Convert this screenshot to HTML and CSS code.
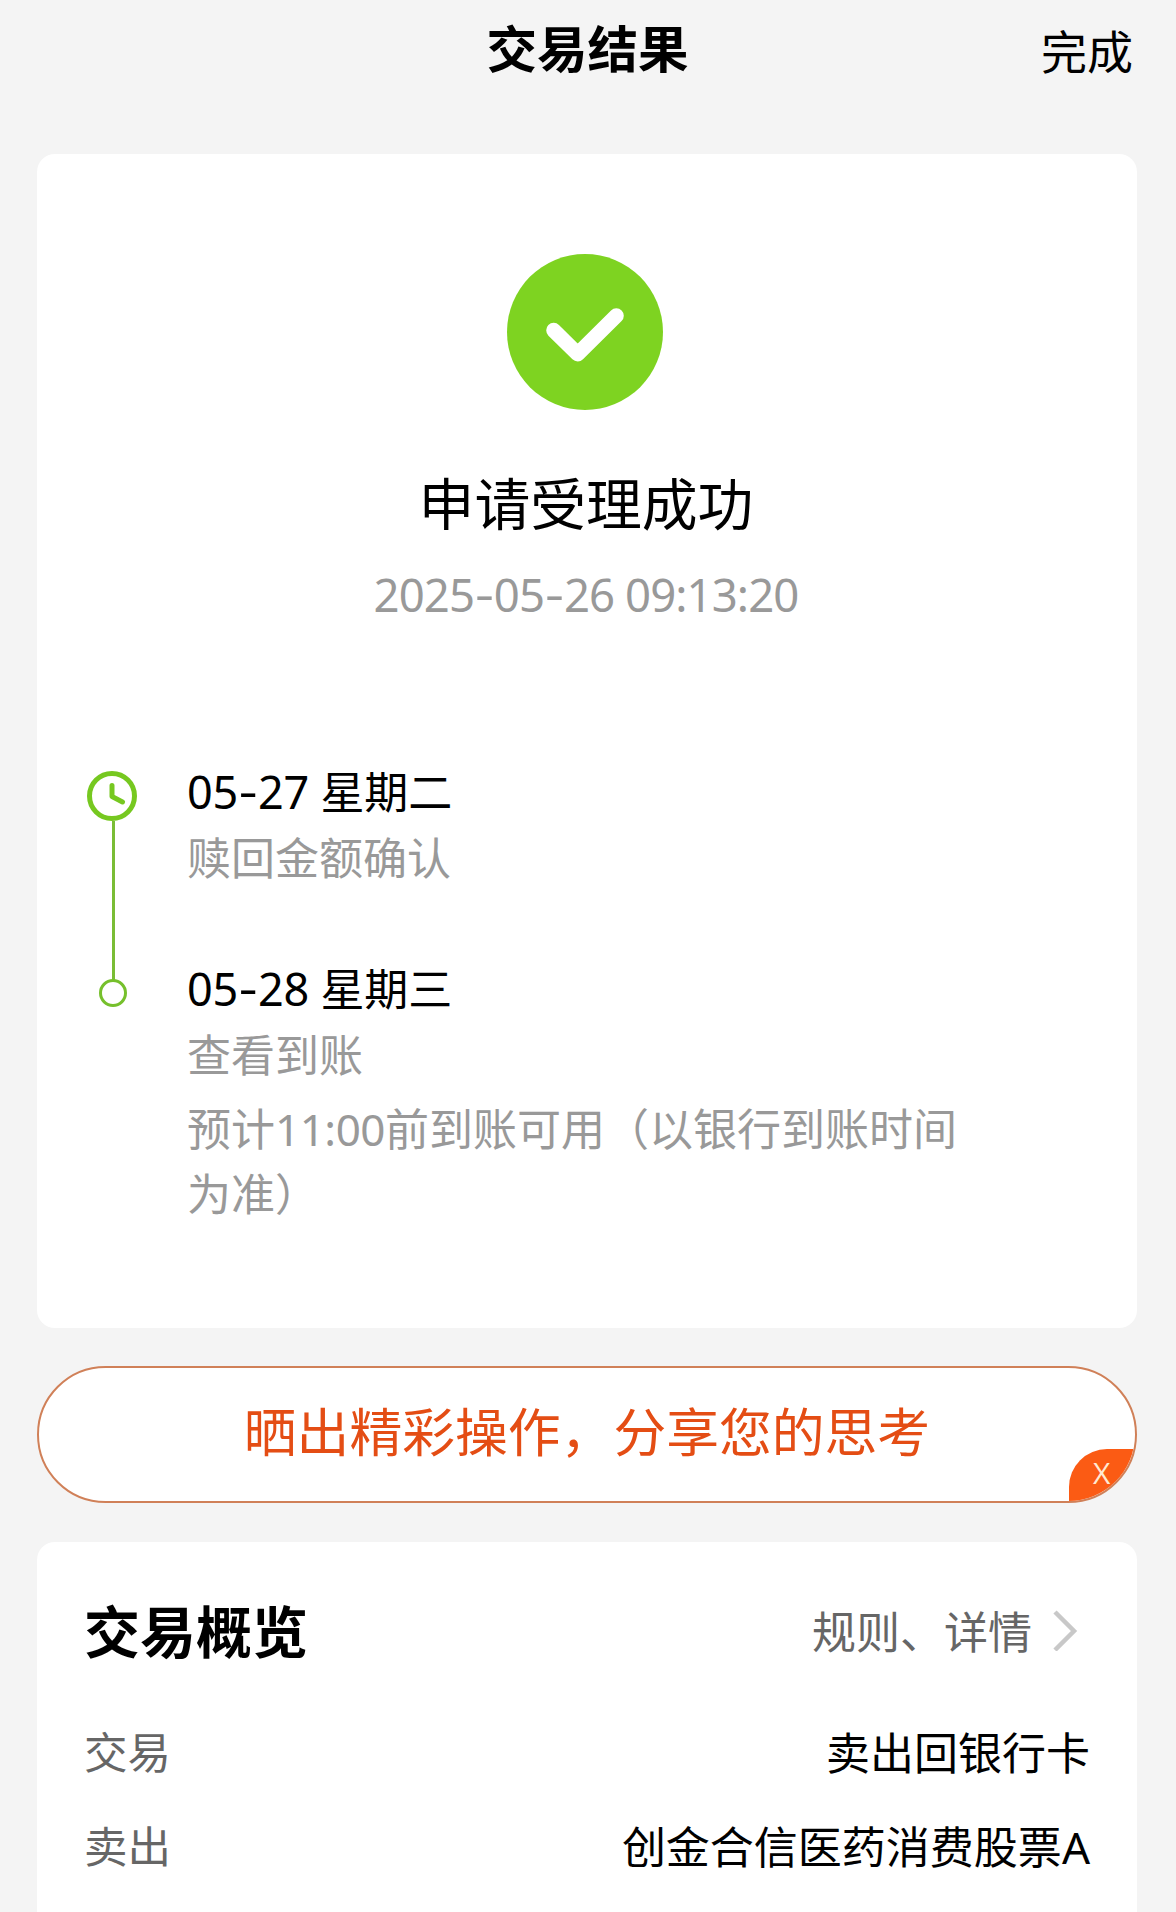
FILE: index.html
```html
<!DOCTYPE html>
<html lang="zh-CN">

<head>
  <meta charset="UTF-8">
  <meta name="viewport" content="width=device-width, initial-scale=1.0">
  <title>交易结果</title>
  <link rel="stylesheet" href="styles.css">
</head>

<body>
  <header class="navbar">
    <h1 class="navbar-title">交易结果</h1>
    <a class="navbar-done">完成</a>
  </header>

  <main>
    <section class="card result">
      <svg class="result-icon" viewBox="0 0 156 156">
        <circle cx="78" cy="78" r="78" fill="#7ed321" />
        <path d="M46.7 76.3L70.7 100L109.3 61.7" fill="none" stroke="#fff" stroke-width="15" stroke-linecap="round" stroke-linejoin="round" />
      </svg>
      <h2 class="result-title">申请受理成功</h2>
      <p class="result-time"><span class="num">2025<span class="dash">-</span>05<span class="dash">-</span>26 09:13:20</span></p>

      <div class="steps">
        <div class="step">
          <div class="rail">
            <svg class="clock" viewBox="0 0 52 50">
              <circle cx="25" cy="25" r="22.5" fill="none" stroke="#76c820" stroke-width="5" />
              <path d="M25 14.500V25.500L35.500 31" fill="none" stroke="#76c820" stroke-width="5" stroke-linecap="round" stroke-linejoin="round" />
            </svg>
            <span class="line"></span>
          </div>
          <div class="step-text">
            <p class="step-date"><span class="num">05<span class="dash">-</span>27 </span>星期二</p>
            <p>赎回金额确认</p>
          </div>
        </div>

        <div class="step">
          <div class="rail last">
            <span class="line"></span>
            <span class="dot"></span>
          </div>
          <div class="step-text">
            <p class="step-date"><span class="num">05<span class="dash">-</span>28 </span>星期三</p>
            <p>查看到账</p>
            <p class="step-note">预计<span class="num">11:00</span>前到账可用（以银行到账时间为准）</p>
          </div>
        </div>
      </div>
    </section>

    <section class="share">
      <span class="share-text">晒出精彩操作，分享您的思考</span>
      <span class="share-close">X</span>
    </section>

    <section class="card overview">
      <div class="overview-head">
        <h2>交易概览</h2>
        <a class="overview-link">
          规则、详情
          <svg class="arrow" viewBox="0 0 26 42">
            <path d="M3 3L22 22L3 41" fill="none" stroke="#c8c8c8" stroke-width="4.5" />
          </svg>
        </a>
      </div>
      <div class="row">
        <span class="row-label">交易</span>
        <span>卖出回银行卡</span>
      </div>
      <div class="row">
        <span class="row-label">卖出</span>
        <span>创金合信医药消费股票<span class="num">A</span></span>
      </div>
    </section>
  </main>
</body>

</html>
```
FILE: styles.css
```css
* {
  box-sizing: border-box;
}

body {
  margin: 0;
  height: 1912px;
  overflow: hidden;
  background: #f4f4f4;
  color: #000;
  font-family: "Noto Sans CJK SC", sans-serif;
  font-size: 44px;
}

h1,
h2,
p {
  margin: 0;
}

/* latin letters and digits */
.num {
  font-family: "Noto Sans", "Noto Sans CJK SC", sans-serif;
  line-height: 1;
}

/* top bar */
.navbar {
  display: grid;
  grid-template-columns: 1fr auto 1fr;
  align-items: center;
  height: 92px;
  margin-bottom: 62px;
  padding: 0 43px 0 42px;
}

.navbar-title {
  grid-column: 2;
  font-size: 50.5px;
  font-weight: 700;
  line-height: 92px;
}

.navbar-done {
  justify-self: end;
  padding-top: 6px;
  font-size: 46px;
  line-height: 86px;
}

main {
  padding: 0 39px 0 37px;
}

.card {
  background: #fff;
  border-radius: 18px;
}

/* result card */
.result {
  display: flex;
  flex-direction: column;
  align-items: center;
  height: 1174px;
  padding: 100px 50px 0;
}

.result-icon {
  width: 156px;
  height: 156px;
  margin-right: 4px;
}

.result-title {
  margin-top: 51px;
  margin-right: 2px;
  font-size: 55.8px;
  font-weight: 400;
  line-height: 80px;
}

.result-time {
  margin-top: 21px;
  margin-right: 2px;
  color: #999;
  font-size: 45.5px;
  letter-spacing: -0.9px;
  line-height: 60px;
}

.dash {
  display: inline-block;
  transform: translateY(-2px) scaleX(1.3);
  margin: 0 3px;
}

/* timeline */
.steps {
  align-self: stretch;
  margin-top: 134px;
}

.step {
  display: flex;
  gap: 48px;
  color: #999;
  line-height: 65.5px;
}

.step:first-child {
  height: 197px;
}

.rail {
  display: flex;
  flex-direction: column;
  align-items: center;
  width: 52px;
  padding-top: 15px;
}

.rail.last {
  padding-top: 0;
}

.clock {
  width: 52px;
  height: 50px;
}

.line {
  flex: 1;
  width: 3px;
  background: #7abd35;
}

.rail.last .line {
  flex: none;
  height: 27px;
}

.dot {
  width: 28px;
  height: 28px;
  border: 3px solid #76c02c;
  border-radius: 50%;
  margin-top: -1px;
}

.step-text {
  width: 790px;
  padding-top: 2px;
}

.step-date {
  color: #000;
}

.step-date .num {
  font-size: 45px;
  letter-spacing: -0.3px;
}

.step-note {
  margin-top: 8.5px;
}

.step-note .num {
  letter-spacing: -0.5px;
}

/* share banner */
.share {
  position: relative;
  display: flex;
  justify-content: center;
  height: 137px;
  margin: 38px 0 39px;
  overflow: hidden;
  background: #fff;
  border: 2px solid #d08058;
  border-radius: 69px;
  color: #e44d14;
}

.share-text {
  font-size: 52.8px;
  line-height: 123px;
}

.share-close {
  position: absolute;
  right: 0;
  bottom: 0;
  width: 66px;
  height: 52px;
  padding-left: 24px;
  background: #fb5b14;
  border-top-left-radius: 38px;
  color: #ffe9d2;
  font-family: "Open Sans", sans-serif;
  font-size: 30px;
  line-height: 48px;
}

/* overview card */
.overview {
  height: 400px;
  padding: 43px 47px 0;
}

.overview-head {
  display: flex;
  justify-content: space-between;
  align-items: center;
  height: 88px;
  margin-bottom: 31px;
}

.overview-head h2 {
  font-size: 56px;
  font-weight: 700;
  line-height: 80px;
}

.overview-link {
  display: flex;
  align-items: center;
  gap: 20px;
  padding-top: 2px;
  padding-right: 12px;
  color: #666;
}

.arrow {
  width: 26px;
  height: 42px;
}

.row {
  display: flex;
  justify-content: space-between;
  line-height: 94px;
}

.row-label {
  color: #666;
  font-size: 43.5px;
}
```
